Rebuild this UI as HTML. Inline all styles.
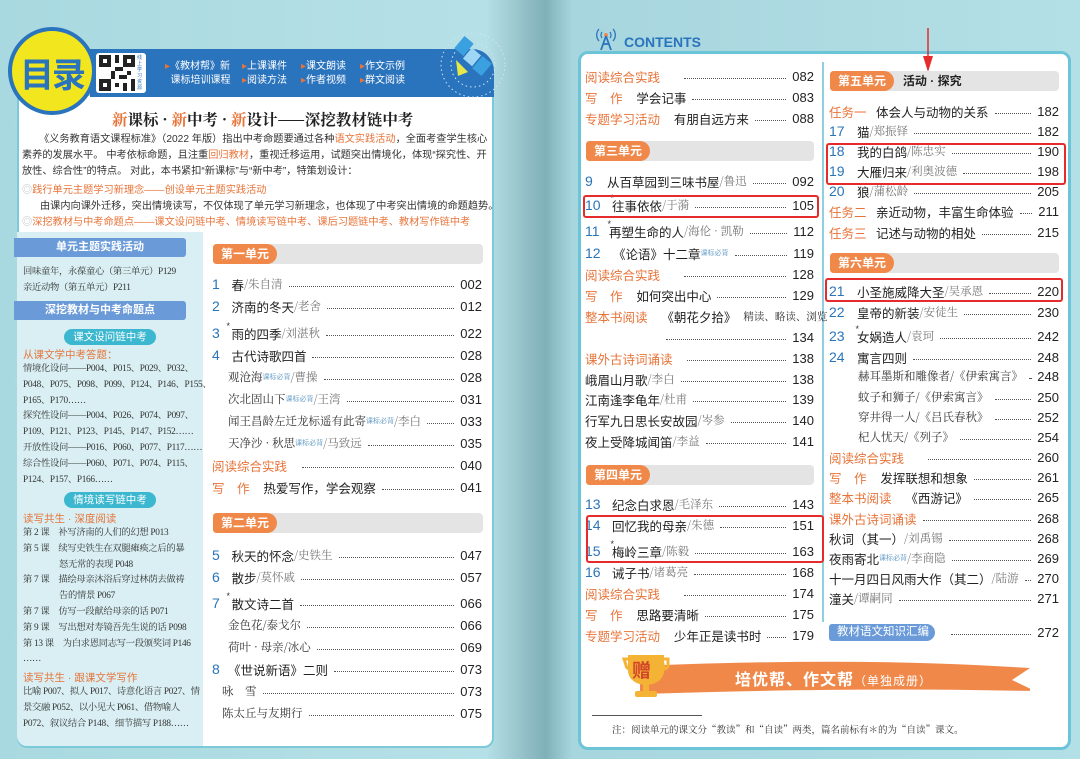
<!DOCTYPE html>
<html><head><meta charset="utf-8">
<style>
*{margin:0;padding:0;box-sizing:border-box}
body{width:1080px;height:759px;overflow:hidden;position:relative;font-family:"Liberation Sans","Noto Sans CJK SC",sans-serif;background:linear-gradient(90deg,#a9d9e0 0%,#b6e0e7 45%,#8fbcc4 49%,#7fb0b8 50.5%,#a8d6de 53%,#b3dfe6 100%);color:#222}
.a{position:absolute;white-space:nowrap}
.r{position:absolute;display:flex;align-items:center;height:18px;white-space:nowrap;font-size:12.5px;color:#222}
.r i{flex:1;border-bottom:1.5px dotted #555;margin:0 6px;height:0;align-self:center;position:relative;top:2px}
.r b{font-weight:normal;font-size:13px;color:#222}
.n{color:#2a74b8;font-size:14px;display:inline-block;position:relative}
.n sup{position:absolute;right:-2px;top:-4px;font-size:9px;color:#333}
.o{color:#e8743a}
.au{color:#777;font-family:"Noto Serif CJK SC",serif;font-size:11.5px}
.s{font-family:"Noto Serif CJK SC",serif}
.sup{color:#6aa0c8;font-size:7px;vertical-align:super}
.tab{position:absolute;height:20px;background:#e4e4e4;border-radius:4px}
.tab span{display:inline-block;height:20px;line-height:20px;padding:0 8px;background:#f0884a;color:#fff;font-size:12px;font-weight:bold;border-radius:4px 12px 12px 4px}
.sb{font-family:"Liberation Serif","Noto Serif CJK SC",serif;font-size:9.3px;letter-spacing:-0.3px;color:#333}
.box{position:absolute;border:2px solid #e52b2b;border-radius:3px}
</style></head><body>

<!-- LEFT PAGE -->
<div class="a" style="left:17px;top:96px;width:477px;height:652px;background:#fff;border-radius:0 0 10px 10px;border:2px solid #7cc9d9;border-top:none"></div>
<div class="a" style="left:17px;top:232px;width:186px;height:514px;background:#d9eff3;border-radius:0 0 0 10px"></div>
<div class="a" style="left:90px;top:49px;width:404px;height:48px;background:#2a73bd;border-radius:0 22px 0 0"></div>
<svg class="a" style="left:438px;top:30px" width="70" height="70" viewBox="0 0 70 70"><circle cx="35" cy="35" r="32" fill="none" stroke="#cfe6f2" stroke-dasharray="1.5 3"/><circle cx="35" cy="35" r="22" fill="none" stroke="#cfe6f2" stroke-dasharray="1.5 3"/><rect x="20" y="8" width="12" height="16" fill="#3aa0e0" transform="rotate(40 26 16)"/><rect x="38" y="28" width="12" height="16" fill="#3aa0e0" transform="rotate(40 44 36)"/><rect x="28" y="20" width="12" height="14" fill="#9ed6f5" transform="rotate(40 34 27)"/><path d="M18 30 L30 42 L20 46 Z" fill="#e6e84a"/></svg>
<div class="a" style="left:8px;top:27px;width:88px;height:88px;border-radius:50%;background:#f2e61e;border:4px solid #2a73bd"></div>
<div class="a" style="left:20px;top:48px;font-size:34px;font-weight:bold;color:#2a73bd;letter-spacing:-2px">目录</div>
<div class="a" style="left:96px;top:53px;width:50px;height:40px;background:#fff;border-radius:3px"></div>
<svg class="a" style="left:99px;top:55px" width="36" height="36" viewBox="0 0 9 9"><rect width="9" height="9" fill="#fff"/><path d="M0 0h3v3h-3zM6 0h3v3h-3zM0 6h3v3h-3zM4 0h1v2h-1zM4 3h2v1h-2zM3 4h1v2h-1zM5 5h2v1h-2zM7 4h1v1h-1zM6 7h1v2h-1zM4 7h1v1h-1zM8 6h1v3h-1z" fill="#222"/><path d="M1 1h1v1h-1zM7 1h1v1h-1zM1 7h1v1h-1z" fill="#fff"/></svg>
<div class="a" style="left:137px;top:55px;font-size:5px;color:#2a73bd;width:6px;white-space:normal;line-height:6px">线上学习资源</div>
<div class="a" style="left:165px;top:60px;font-size:10px;color:#fff;line-height:14px"><span class="o">▸</span>《教材帮》新<br>&nbsp;&nbsp;课标培训课程</div>
<div class="a" style="left:242px;top:60px;font-size:10px;color:#fff;line-height:14px"><span class="o">▸</span>上课课件<br><span class="o">▸</span>阅读方法</div>
<div class="a" style="left:301px;top:60px;font-size:10px;color:#fff;line-height:14px"><span class="o">▸</span>课文朗读<br><span class="o">▸</span>作者视频</div>
<div class="a" style="left:360px;top:60px;font-size:10px;color:#fff;line-height:14px"><span class="o">▸</span>作文示例<br><span class="o">▸</span>群文阅读</div>

<div class="a s" style="left:112px;top:108px;font-size:15.5px;font-weight:bold"><span class="o">新</span>课标 · <span class="o">新</span>中考 · <span class="o">新</span>设计——深挖教材链中考</div>
<div class="a" style="left:22px;top:132px;font-size:10.2px;line-height:16px;width:466px;white-space:normal;color:#333">&nbsp;&nbsp;&nbsp;&nbsp;&nbsp;&nbsp;《义务教育语文课程标准》（2022 年版）指出中考命题要通过各种<span class="o">语文实践活动</span>，全面考查学生核心素养的发展水平。 中考依标命题，且注重<span class="o">回归教材</span>，重视迁移运用，试题突出情境化，体现“探究性、开放性、综合性”的特点。 对此，本书紧扣“新课标”与“新中考”，特策划设计：</div>
<div class="a o" style="left:22px;top:181px;font-size:10.2px"><span style="color:#bbb">◎</span>践行单元主题学习新理念——创设单元主题实践活动</div>
<div class="a" style="left:40px;top:197px;font-size:10.2px;color:#333">由课内向课外迁移，突出情境读写，不仅体现了单元学习新理念，也体现了中考突出情境的命题趋势。</div>
<div class="a o" style="left:22px;top:213px;font-size:10.2px"><span style="color:#bbb">◎</span>深挖教材与中考命题点——课文设问链中考、情境读写链中考、课后习题链中考、教材写作链中考</div>

<!-- sidebar -->
<div class="a" style="left:14px;top:238px;width:172px;height:19px;background:#6a9bd8;color:#fff;font-size:11px;font-weight:bold;text-align:center;line-height:19px;border-radius:0 3px 3px 0">单元主题实践活动</div>
<div class="a sb" style="left:23px;top:263px">回味童年，永葆童心（第三单元）P129</div>
<div class="a sb" style="left:23px;top:279px">亲近动物（第五单元）P211</div>
<div class="a" style="left:14px;top:301px;width:172px;height:19px;background:#6a9bd8;color:#fff;font-size:11px;font-weight:bold;text-align:center;line-height:19px;border-radius:0 3px 3px 0">深挖教材与中考命题点</div>
<div class="a" style="left:64px;top:329px;width:92px;height:16px;background:#3bb7cf;color:#fff;font-size:10.5px;text-align:center;line-height:16px;border-radius:8px">课文设问链中考</div>
<div class="a o" style="left:23px;top:347px;font-size:10.5px">从课文学中考答题：</div>
<div class="a sb" style="left:23px;top:362px;line-height:15.8px">情境化设问——P004、P015、P029、P032、<br>P048、P075、P098、P099、P124、P146、P155、<br>P165、P170……<br>探究性设问——P004、P026、P074、P097、<br>P109、P121、P123、P145、P147、P152……<br>开放性设问——P016、P060、P077、P117……<br>综合性设问——P060、P071、P074、P115、<br>P124、P157、P166……</div>
<div class="a" style="left:64px;top:492px;width:92px;height:16px;background:#3bb7cf;color:#fff;font-size:10.5px;text-align:center;line-height:16px;border-radius:8px">情境读写链中考</div>
<div class="a o" style="left:23px;top:511px;font-size:10.5px">读写共生 · 深度阅读</div>
<div class="a sb" style="left:23px;top:526px;line-height:15.8px">第 2 课　补写济南的人们的幻想 P013<br>第 5 课　续写史铁生在双腿瘫痪之后的暴<br>　　　　怒无常的表现 P048<br>第 7 课　描绘母亲沐浴后穿过林荫去做祷<br>　　　　告的情景 P067<br>第 7 课　仿写一段献给母亲的话 P071<br>第 9 课　写出想对寿镜吾先生说的话 P098<br>第 13 课　为白求恩同志写一段颁奖词 P146<br>……</div>
<div class="a o" style="left:23px;top:670px;font-size:10.5px">读写共生 · 跟课文学写作</div>
<div class="a sb" style="left:23px;top:685px;line-height:15.8px">比喻 P007、拟人 P017、诗意化语言 P027、情<br>景交融 P052、以小见大 P061、借物喻人<br>P072、叙议结合 P148、细节描写 P188……</div>

<!-- left page right column -->
<div class="tab" style="left:213px;top:244px;width:270px"><span>第一单元</span></div>
<div class="r" style="left:212px;top:275px;width:270px"><span class="n" style="width:16px">1</span>&nbsp;春<span class="au">/朱自清</span><i></i><b>002</b></div>
<div class="r" style="left:212px;top:297px;width:270px"><span class="n" style="width:16px">2</span>&nbsp;济南的冬天<span class="au">/老舍</span><i></i><b>012</b></div>
<div class="r" style="left:212px;top:324px;width:270px"><span class="n" style="width:16px">3<sup>*</sup></span>&nbsp;雨的四季<span class="au">/刘湛秋</span><i></i><b>022</b></div>
<div class="r" style="left:212px;top:346px;width:270px"><span class="n" style="width:16px">4</span>&nbsp;古代诗歌四首<i></i><b>028</b></div>
<div class="r" style="left:228px;top:368px;width:254px"><span class="au" style="color:#333">观沧海</span><span class="sup">课标必背</span><span class="au">/曹操</span><i></i><b>028</b></div>
<div class="r" style="left:228px;top:390px;width:254px"><span class="au" style="color:#333">次北固山下</span><span class="sup">课标必背</span><span class="au">/王湾</span><i></i><b>031</b></div>
<div class="r" style="left:228px;top:412px;width:254px"><span class="au" style="color:#333">闻王昌龄左迁龙标遥有此寄</span><span class="sup">课标必背</span><span class="au">/李白</span><i></i><b>033</b></div>
<div class="r" style="left:228px;top:434px;width:254px"><span class="au" style="color:#333">天净沙 · 秋思</span><span class="sup">课标必背</span><span class="au">/马致远</span><i></i><b>035</b></div>
<div class="r" style="left:212px;top:456px;width:270px"><span class="o" style="width:70px">阅读综合实践</span><span style="width:14px"></span><i></i><b>040</b></div>
<div class="r" style="left:212px;top:478px;width:270px"><span class="o">写　作</span>&nbsp;&nbsp;&nbsp;&nbsp;热爱写作，学会观察<i></i><b>041</b></div>
<div class="tab" style="left:213px;top:513px;width:270px"><span>第二单元</span></div>
<div class="r" style="left:212px;top:546px;width:270px"><span class="n" style="width:16px">5</span>&nbsp;秋天的怀念<span class="au">/史铁生</span><i></i><b>047</b></div>
<div class="r" style="left:212px;top:568px;width:270px"><span class="n" style="width:16px">6</span>&nbsp;散步<span class="au">/莫怀戚</span><i></i><b>057</b></div>
<div class="r" style="left:212px;top:594px;width:270px"><span class="n" style="width:16px">7<sup>*</sup></span>&nbsp;散文诗二首<i></i><b>066</b></div>
<div class="r" style="left:228px;top:616px;width:254px"><span class="au" style="color:#333">金色花/泰戈尔</span><i></i><b>066</b></div>
<div class="r" style="left:228px;top:638px;width:254px"><span class="au" style="color:#333">荷叶 · 母亲/冰心</span><i></i><b>069</b></div>
<div class="r" style="left:212px;top:660px;width:270px"><span class="n" style="width:16px">8</span>《世说新语》二则<i></i><b>073</b></div>
<div class="r" style="left:222px;top:682px;width:260px"><span class="au" style="color:#333">咏　雪</span><i></i><b>073</b></div>
<div class="r" style="left:222px;top:704px;width:260px"><span class="au" style="color:#333">陈太丘与友期行</span><i></i><b>075</b></div>

<!-- RIGHT PAGE -->
<svg class="a" style="left:593px;top:25px" width="26" height="26" viewBox="0 0 26 26"><path d="M6 4a9 9 0 0 0 0 12M20 4a9 9 0 0 1 0 12M9 7a5 5 0 0 0 0 6M17 7a5 5 0 0 1 0 6" stroke="#2a73bd" fill="none" stroke-width="1.3"/><circle cx="13" cy="10" r="2" fill="#f08a4b"/><path d="M13 11 L8 25 M13 11 L18 25 M10 19h6" stroke="#2a73bd" stroke-width="1.8" fill="none"/></svg>
<div class="a" style="left:624px;top:34px;font-size:14px;font-weight:bold;color:#2a73bd">CONTENTS</div>
<div class="a" style="left:578px;top:51px;width:493px;height:699px;background:#fff;border:3px solid #6cc4d8;border-radius:10px"></div>
<div class="a" style="left:822px;top:62px;width:2px;height:560px;background:#8fd0e0"></div>
<svg class="a" style="left:921px;top:28px" width="14" height="44" viewBox="0 0 14 44"><path d="M7 0V32" stroke="#e52b2b" stroke-width="1.5"/><path d="M2 28L7 44L12 28Z" fill="#e52b2b"/></svg>

<div class="r" style="left:585px;top:67px;width:229px"><span class="o">阅读综合实践</span><span style="width:18px"></span><i></i><b>082</b></div>
<div class="r" style="left:585px;top:88px;width:229px"><span class="o">写　作</span>&nbsp;&nbsp;&nbsp;&nbsp;学会记事<i></i><b>083</b></div>
<div class="r" style="left:585px;top:109px;width:229px"><span class="o">专题学习活动</span>&nbsp;&nbsp;&nbsp;&nbsp;有朋自远方来<i></i><b>088</b></div>
<div class="tab" style="left:586px;top:141px;width:228px"><span>第三单元</span></div>
<div class="r" style="left:585px;top:172px;width:229px"><span class="n" style="width:22px">9</span>从百草园到三味书屋<span class="au">/鲁迅</span><i></i><b>092</b></div>
<div class="r" style="left:585px;top:196px;width:229px"><span class="n" style="width:27px">10<sup>*</sup></span>往事依依<span class="au">/于漪</span><i></i><b>105</b></div>
<div class="r" style="left:585px;top:222px;width:229px"><span class="n" style="width:24px">11<sup>*</sup></span>再塑生命的人<span class="au">/海伦 · 凯勒</span><i></i><b>112</b></div>
<div class="r" style="left:585px;top:244px;width:229px"><span class="n" style="width:28px">12</span>《论语》十二章<span class="sup">课标必背</span><i></i><b>119</b></div>
<div class="r" style="left:585px;top:265px;width:229px"><span class="o">阅读综合实践</span><span style="width:18px"></span><i></i><b>128</b></div>
<div class="r" style="left:585px;top:286px;width:229px"><span class="o">写　作</span>&nbsp;&nbsp;&nbsp;&nbsp;如何突出中心<i></i><b>129</b></div>
<div class="r" style="left:585px;top:307px;width:229px"><span class="o">整本书阅读</span>&nbsp;&nbsp;&nbsp;&nbsp;《朝花夕拾》&nbsp;&nbsp;<span class="au" style="color:#333;font-size:10.5px">精读、略读、浏览</span></div>
<div class="r" style="left:660px;top:328px;width:154px"><i></i><b>134</b></div>
<div class="r" style="left:585px;top:349px;width:229px"><span class="o">课外古诗词诵读</span><span style="width:8px"></span><i></i><b>138</b></div>
<div class="r" style="left:585px;top:370px;width:229px">峨眉山月歌<span class="au">/李白</span><i></i><b>138</b></div>
<div class="r" style="left:585px;top:390px;width:229px">江南逢李龟年<span class="au">/杜甫</span><i></i><b>139</b></div>
<div class="r" style="left:585px;top:411px;width:229px">行军九日思长安故园<span class="au">/岑参</span><i></i><b>140</b></div>
<div class="r" style="left:585px;top:432px;width:229px">夜上受降城闻笛<span class="au">/李益</span><i></i><b>141</b></div>
<div class="tab" style="left:586px;top:465px;width:228px"><span>第四单元</span></div>
<div class="r" style="left:585px;top:495px;width:229px"><span class="n" style="width:27px">13</span>纪念白求恩<span class="au">/毛泽东</span><i></i><b>143</b></div>
<div class="r" style="left:585px;top:516px;width:229px"><span class="n" style="width:27px">14</span>回忆我的母亲<span class="au">/朱德</span><i></i><b>151</b></div>
<div class="r" style="left:585px;top:542px;width:229px"><span class="n" style="width:27px">15<sup>*</sup></span>梅岭三章<span class="au">/陈毅</span><i></i><b>163</b></div>
<div class="r" style="left:585px;top:563px;width:229px"><span class="n" style="width:27px">16</span>诫子书<span class="au">/诸葛亮</span><i></i><b>168</b></div>
<div class="r" style="left:585px;top:584px;width:229px"><span class="o">阅读综合实践</span><span style="width:18px"></span><i></i><b>174</b></div>
<div class="r" style="left:585px;top:605px;width:229px"><span class="o">写　作</span>&nbsp;&nbsp;&nbsp;&nbsp;思路要清晰<i></i><b>175</b></div>
<div class="r" style="left:585px;top:626px;width:229px"><span class="o">专题学习活动</span>&nbsp;&nbsp;&nbsp;&nbsp;少年正是读书时<i></i><b>179</b></div>

<div class="tab" style="left:830px;top:71px;width:229px"><span>第五单元</span>&nbsp;&nbsp;<b style="font-size:12px">活动 · 探究</b></div>
<div class="r" style="left:829px;top:102px;width:230px"><span class="o" style="width:47px">任务一</span>体会人与动物的关系<i></i><b>182</b></div>
<div class="r" style="left:829px;top:122px;width:230px"><span class="n" style="width:28px">17</span>猫<span class="au">/郑振铎</span><i></i><b>182</b></div>
<div class="r" style="left:829px;top:142px;width:230px"><span class="n" style="width:28px">18</span>我的白鸽<span class="au">/陈忠实</span><i></i><b>190</b></div>
<div class="r" style="left:829px;top:162px;width:230px"><span class="n" style="width:28px">19</span>大雁归来<span class="au">/利奥波德</span><i></i><b>198</b></div>
<div class="r" style="left:829px;top:182px;width:230px"><span class="n" style="width:28px">20</span>狼<span class="au">/蒲松龄</span><i></i><b>205</b></div>
<div class="r" style="left:829px;top:202px;width:230px"><span class="o" style="width:47px">任务二</span>亲近动物，丰富生命体验<i></i><b>211</b></div>
<div class="r" style="left:829px;top:223px;width:230px"><span class="o" style="width:47px">任务三</span>记述与动物的相处<i></i><b>215</b></div>
<div class="tab" style="left:830px;top:253px;width:229px"><span>第六单元</span></div>
<div class="r" style="left:829px;top:282px;width:230px"><span class="n" style="width:28px">21</span>小圣施威降大圣<span class="au">/吴承恩</span><i></i><b>220</b></div>
<div class="r" style="left:829px;top:303px;width:230px"><span class="n" style="width:28px">22</span>皇帝的新装<span class="au">/安徒生</span><i></i><b>230</b></div>
<div class="r" style="left:829px;top:327px;width:230px"><span class="n" style="width:28px">23<sup>*</sup></span>女娲造人<span class="au">/袁珂</span><i></i><b>242</b></div>
<div class="r" style="left:829px;top:348px;width:230px"><span class="n" style="width:28px">24</span>寓言四则<i></i><b>248</b></div>
<div class="r" style="left:858px;top:367px;width:201px"><span class="au" style="color:#333">赫耳墨斯和雕像者/《伊索寓言》</span><i></i><b>248</b></div>
<div class="r" style="left:858px;top:388px;width:201px"><span class="au" style="color:#333">蚊子和狮子/《伊索寓言》</span><i></i><b>250</b></div>
<div class="r" style="left:858px;top:408px;width:201px"><span class="au" style="color:#333">穿井得一人/《吕氏春秋》</span><i></i><b>252</b></div>
<div class="r" style="left:858px;top:428px;width:201px"><span class="au" style="color:#333">杞人忧天/《列子》</span><i></i><b>254</b></div>
<div class="r" style="left:829px;top:448px;width:230px"><span class="o">阅读综合实践</span><span style="width:18px"></span><i></i><b>260</b></div>
<div class="r" style="left:829px;top:468px;width:230px"><span class="o">写　作</span>&nbsp;&nbsp;&nbsp;&nbsp;发挥联想和想象<i></i><b>261</b></div>
<div class="r" style="left:829px;top:488px;width:230px"><span class="o">整本书阅读</span>&nbsp;&nbsp;&nbsp;&nbsp;《西游记》<i></i><b>265</b></div>
<div class="r" style="left:829px;top:509px;width:230px"><span class="o">课外古诗词诵读</span><i></i><b>268</b></div>
<div class="r" style="left:829px;top:529px;width:230px">秋词（其一）<span class="au">/刘禹锡</span><i></i><b>268</b></div>
<div class="r" style="left:829px;top:549px;width:230px">夜雨寄北<span class="sup">课标必背</span><span class="au">/李商隐</span><i></i><b>269</b></div>
<div class="r" style="left:829px;top:569px;width:230px">十一月四日风雨大作（其二）<span class="au">/陆游</span><i></i><b>270</b></div>
<div class="r" style="left:829px;top:589px;width:230px">潼关<span class="au">/谭嗣同</span><i></i><b>271</b></div>
<div class="r" style="left:829px;top:623px;width:230px"><span style="display:inline-block;background:#6a9bd8;color:#fff;font-size:11.5px;padding:0 8px;height:17px;line-height:17px;border-radius:3px 9px 9px 3px;width:106px">教材语文知识汇编</span><span style="width:10px"></span><i></i><b>272</b></div>

<!-- red boxes -->
<div class="box" style="left:583px;top:195px;width:236px;height:23px"></div>
<div class="box" style="left:586px;top:515px;width:238px;height:48px"></div>
<div class="box" style="left:826px;top:143px;width:240px;height:42px"></div>
<div class="box" style="left:825px;top:278px;width:238px;height:24px"></div>

<!-- ribbon -->
<svg class="a" style="left:640px;top:658px" width="390" height="40" viewBox="0 0 390 40"><path d="M0 8 Q190 0 335 7 L390 10 L372 22 L395 33 L330 32 Q190 30 0 36 Z" fill="#f0884a"/></svg>
<svg class="a" style="left:620px;top:653px" width="52" height="48" viewBox="0 0 52 48"><path d="M4 6h6v10a4 4 0 0 1-4-4zM42 6h6v6a4 4 0 0 1-4 4z" fill="none" stroke="#f5b335" stroke-width="3"/><path d="M8 2h36v16a18 14 0 0 1-36 0z" fill="#f5b335"/><rect x="23" y="30" width="6" height="8" fill="#f5b335"/><rect x="15" y="38" width="22" height="6" rx="2" fill="#f5b335"/></svg>
<div class="a" style="left:632px;top:656px;font-size:19px;font-weight:bold;color:#d2462a">赠</div>
<div class="a" style="left:735px;top:666px;font-size:16px;font-weight:bold;color:#fff;letter-spacing:1px">培优帮、作文帮<span style="font-size:12px;font-weight:normal">（单独成册）</span></div>
<div class="a" style="left:592px;top:715px;width:110px;height:1px;background:#555"></div>
<div class="a s" style="left:612px;top:722px;font-size:9.5px;color:#333">注：阅读单元的课文分“教读”和“自读”两类，篇名前标有＊的为“自读”课文。</div>
</body></html>
